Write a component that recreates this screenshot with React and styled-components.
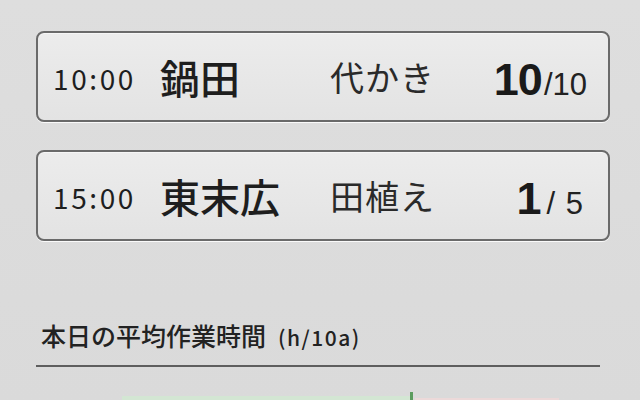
import React from "react";
import styled, { createGlobalStyle } from "styled-components";

const Global = createGlobalStyle`
  html, body { margin: 0; padding: 0; }
  body {
    background: #dcdcdc;
    font-family: "Noto Sans CJK JP", "Liberation Sans", sans-serif;
    color: #222;
  }
`;

const Page = styled.div`
  width: 640px;
  height: 400px;
  overflow: hidden;
  box-sizing: border-box;
  padding: 31px 30px 0 36px;
  background: linear-gradient(#dedede, #dadada);
  display: flex;
  flex-direction: column;
`;

const CardList = styled.div`
  display: flex;
  flex-direction: column;
  gap: 28px;
`;

const Card = styled.div`
  height: 91px;
  box-sizing: border-box;
  border: 2px solid #6a6a6a;
  border-radius: 8px;
  background: linear-gradient(#ececec, #e3e3e3);
  box-shadow: 0 1px 0 #fafafa, inset 0 1px 0 #f6f6f6;
  display: grid;
  grid-template-columns: 107px 170px 1fr auto;
  align-items: center;
  padding: 0 ${(p) => p.$padRight}px 0 15px;
`;

const Time = styled.span`
  font-family: "Noto Sans CJK JP", sans-serif;
  font-size: 28px;
  letter-spacing: 2.6px;
  color: #1e1e1e;
  padding-top: 2px;
`;

const Name = styled.span`
  font-family: "Noto Sans CJK JP", sans-serif;
  font-weight: 500;
  font-size: 40px;
  color: #1e1e1e;
`;

const Task = styled.span`
  font-family: "Noto Sans CJK JP", sans-serif;
  font-weight: 400;
  font-size: 34px;
  letter-spacing: 1px;
  color: #2a2a2a;
`;

const Count = styled.span`
  font-family: "Liberation Sans", Arial, sans-serif;
  display: flex;
  align-items: baseline;
  padding-top: 6px;
`;

const Done = styled.span`
  font-weight: 700;
  font-size: 45px;
  letter-spacing: -1px;
  color: #1a1a1a;
`;

const Total = styled.span`
  font-size: 31px;
  color: #222;
  margin-left: ${(p) => p.$gap}px;
  word-spacing: ${(p) => p.$spacing}px;
`;

const Section = styled.div`
  margin-top: 76px;
  margin-right: 10px;
`;

const Heading = styled.div`
  display: flex;
  align-items: baseline;
  gap: 12px;
  padding: 0 0 12px 5px;
  border-bottom: 2px solid #5e5e5e;
`;

const HeadTitle = styled.span`
  font-family: "Noto Sans CJK JP", sans-serif;
  font-weight: 500;
  font-size: 25px;
  color: #222;
`;

const HeadUnit = styled.span`
  font-family: "Noto Sans CJK JP", sans-serif;
  font-weight: 500;
  font-size: 21px;
  letter-spacing: 1.5px;
  color: #222;
`;

const Chart = styled.div`
  margin-top: 25px;
  margin-left: 86px;
  display: flex;
  align-items: flex-start;
  height: 20px;
`;

const Bar = styled.div`
  margin-top: ${(p) => p.$offset}px;
  height: 14px;
  background: ${(p) => p.$color};
`;

const Marker = styled.div`
  width: 3px;
  height: 20px;
  background: #5c9c5f;
  margin-right: 2px;
`;

const rows = [
  { time: "10:00", name: "鍋田", task: "代かき", done: "10", total: "/10", gap: 2, pad: 21 },
  { time: "15:00", name: "東末広", task: "田植え", done: "1", total: "/ 5", gap: 6, pad: 25 },
];

export default function App() {
  return (
    <>
      <Global />
      <Page>
        <CardList>
          {rows.map((r) => (
            <Card key={r.time} $padRight={r.pad}>
              <Time>{r.time}</Time>
              <Name>{r.name}</Name>
              <Task>{r.task}</Task>
              <Count>
                <Done>{r.done}</Done>
                <Total $gap={r.gap} $spacing={2}>{r.total}</Total>
              </Count>
            </Card>
          ))}
        </CardList>
        <Section>
          <Heading>
            <HeadTitle>本日の平均作業時間</HeadTitle>
            <HeadUnit>(h/10a)</HeadUnit>
          </Heading>
          <Chart>
            <Bar $offset={4} $color="#d3e6d3" style={{ width: 288 }} />
            <Marker />
            <Bar $offset={6} $color="#ecd9d9" style={{ width: 144 }} />
          </Chart>
        </Section>
      </Page>
    </>
  );
}
